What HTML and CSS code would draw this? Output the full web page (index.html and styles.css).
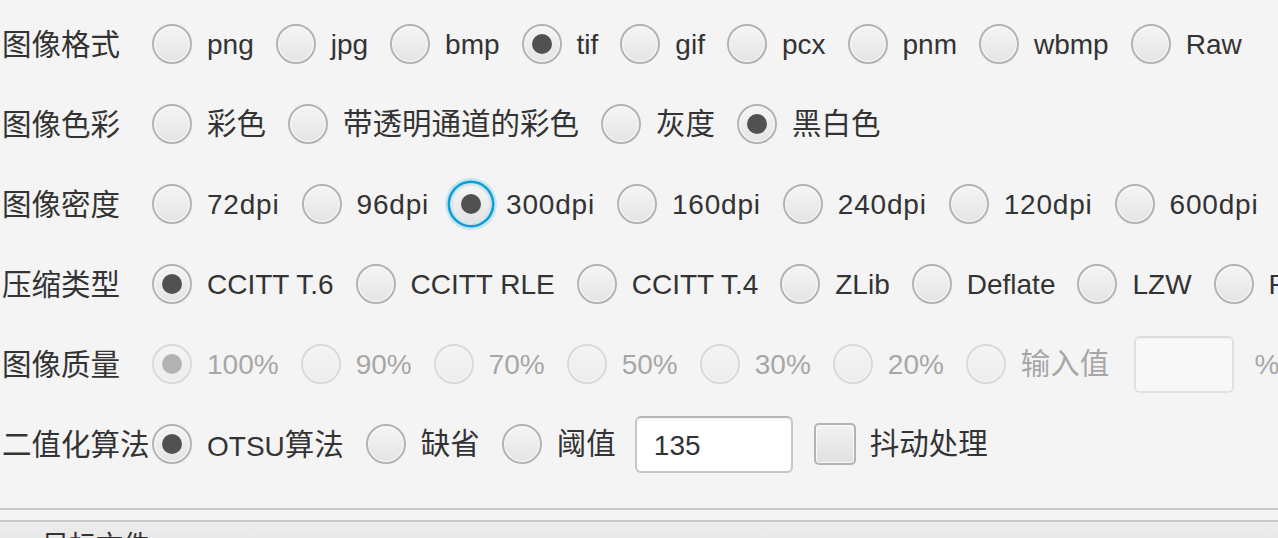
FILE: index.html
```html
<!DOCTYPE html>
<html lang="zh">
<head>
<meta charset="utf-8">
<title>图像设置</title>
<link rel="stylesheet" href="styles.css">
</head>
<body>
<div class="form">
  <div class="row">
    <span class="label zh">图像格式</span>
    <div class="options">
      <label class="opt"><span class="radio"></span><span class="txt">png</span></label>
      <label class="opt"><span class="radio"></span><span class="txt">jpg</span></label>
      <label class="opt"><span class="radio"></span><span class="txt">bmp</span></label>
      <label class="opt"><span class="radio on"></span><span class="txt">tif</span></label>
      <label class="opt"><span class="radio"></span><span class="txt">gif</span></label>
      <label class="opt"><span class="radio"></span><span class="txt">pcx</span></label>
      <label class="opt"><span class="radio"></span><span class="txt">pnm</span></label>
      <label class="opt"><span class="radio"></span><span class="txt">wbmp</span></label>
      <label class="opt"><span class="radio"></span><span class="txt">Raw</span></label>
    </div>
  </div>
  <div class="row">
    <span class="label zh">图像色彩</span>
    <div class="options">
      <label class="opt"><span class="radio"></span><span class="txt zh">彩色</span></label>
      <label class="opt"><span class="radio"></span><span class="txt zh">带透明通道的彩色</span></label>
      <label class="opt"><span class="radio"></span><span class="txt zh">灰度</span></label>
      <label class="opt"><span class="radio on"></span><span class="txt zh">黑白色</span></label>
    </div>
  </div>
  <div class="row">
    <span class="label zh">图像密度</span>
    <div class="options dpi">
      <label class="opt"><span class="radio"></span><span class="txt">72dpi</span></label>
      <label class="opt"><span class="radio"></span><span class="txt">96dpi</span></label>
      <label class="opt"><span class="radio on focus"></span><span class="txt">300dpi</span></label>
      <label class="opt"><span class="radio"></span><span class="txt">160dpi</span></label>
      <label class="opt"><span class="radio"></span><span class="txt">240dpi</span></label>
      <label class="opt"><span class="radio"></span><span class="txt">120dpi</span></label>
      <label class="opt"><span class="radio"></span><span class="txt">600dpi</span></label>
    </div>
  </div>
  <div class="row">
    <span class="label zh">压缩类型</span>
    <div class="options">
      <label class="opt"><span class="radio on"></span><span class="txt">CCITT T.6</span></label>
      <label class="opt"><span class="radio"></span><span class="txt">CCITT RLE</span></label>
      <label class="opt"><span class="radio"></span><span class="txt">CCITT T.4</span></label>
      <label class="opt"><span class="radio"></span><span class="txt">ZLib</span></label>
      <label class="opt"><span class="radio"></span><span class="txt">Deflate</span></label>
      <label class="opt"><span class="radio"></span><span class="txt">LZW</span></label>
      <label class="opt"><span class="radio"></span><span class="txt">PackBits</span></label>
    </div>
  </div>
  <div class="row">
    <span class="label zh">图像质量</span>
    <div class="options">
      <label class="opt disabled"><span class="radio on"></span><span class="txt">100%</span></label>
      <label class="opt disabled"><span class="radio"></span><span class="txt">90%</span></label>
      <label class="opt disabled"><span class="radio"></span><span class="txt">70%</span></label>
      <label class="opt disabled"><span class="radio"></span><span class="txt">50%</span></label>
      <label class="opt disabled"><span class="radio"></span><span class="txt">30%</span></label>
      <label class="opt disabled"><span class="radio"></span><span class="txt">20%</span></label>
      <label class="opt disabled"><span class="radio"></span><span class="txt zh">输入值</span></label>
      <span class="field field-small disabled"></span>
      <span class="txt disabled pct">%</span>
    </div>
  </div>
  <div class="row">
    <span class="label zh">二值化算法</span>
    <div class="options">
      <label class="opt"><span class="radio on"></span><span class="txt">OTSU<span class="zh-in">算法</span></span></label>
      <label class="opt"><span class="radio"></span><span class="txt zh">缺省</span></label>
      <label class="opt"><span class="radio"></span><span class="txt zh">阈值</span></label>
      <span class="field field-wide">135</span>
      <label class="opt"><span class="check"></span><span class="txt zh">抖动处理</span></label>
    </div>
  </div>
</div>
<div class="sep"></div>
<div class="pane-header"><span class="pane-title">目标文件</span></div>
</body>
</html>
```

FILE: styles.css
```css
html, body {
  margin: 0;
  padding: 0;
  background: #f4f4f4;
  overflow: hidden;
  height: 100%;
}
body {
  font-family: "Liberation Sans", "Noto Sans CJK SC", sans-serif;
  font-size: 28px;
  color: #333333;
}
.form {
  display: flex;
  flex-direction: column;
  padding: 4px 0 0 2px;
}
.row {
  display: flex;
  align-items: center;
  height: 80px;
  white-space: nowrap;
}
.label {
  flex: none;
  width: 150px;
  color: #333333;
}
.options {
  display: flex;
  align-items: center;
  gap: 22px;
}
.opt {
  display: flex;
  align-items: center;
  flex: none;
}
.txt {
  line-height: 1.15;
  padding-top: 3px;
}
.zh,
.txt.zh {
  font-family: "Noto Sans CJK SC", sans-serif;
  font-size: 29.5px;
  padding-top: 0;
  padding-bottom: 4px;
}
.zh-in {
  font-family: "Noto Sans CJK SC", sans-serif;
  font-size: 29.5px;
  position: relative;
  top: -1px;
}
.dpi .txt {
  letter-spacing: 0.8px;
}
.radio {
  flex: none;
  box-sizing: border-box;
  width: 40px;
  height: 40px;
  margin-right: 15px;
  border-radius: 50%;
  border: 2px solid #b3b3b3;
  background: linear-gradient(#f5f5f5, #e4e4e4);
  box-shadow: inset 0 0 0 1px #fbfbfb;
  display: flex;
  align-items: center;
  justify-content: center;
}
.radio.on::after {
  content: "";
  width: 20px;
  height: 20px;
  border-radius: 50%;
  background: #515151;
}
.radio.focus {
  border-color: #dbe6ec;
  box-shadow: 0 0 0 1px #cfe3ec, 0 0 0 3.5px #0b9fd6, 0 0 0 6px rgba(11, 159, 214, 0.18);
}
.disabled {
  opacity: 0.4;
}
.check {
  flex: none;
  box-sizing: border-box;
  width: 42px;
  height: 42px;
  margin-right: 14px;
  border-radius: 5px;
  border: 2px solid #b3b3b3;
  background: linear-gradient(#f2f2f2, #e0e0e0);
  box-shadow: inset 0 0 0 1px #f9f9f9;
}
.field {
  flex: none;
  box-sizing: border-box;
  height: 57px;
  border-radius: 6px;
  border: 2px solid #c6c6c6;
  border-top-color: #b6b6b6;
  background: #ffffff;
  box-shadow: inset 0 2px 2px rgba(0, 0, 0, 0.04);
  display: flex;
  align-items: center;
  padding-left: 17px;
  padding-top: 3px;
}
.field-small {
  width: 100px;
  margin-left: 3px;
}
.field-wide {
  width: 158px;
  margin-left: -3px;
  margin-right: -1px;
}
.pct {
  margin-left: -2px;
}
.sep {
  margin-top: 24px;
  height: 2px;
  background: #c8c8c8;
}
.pane-header {
  margin-top: 10px;
  height: 40px;
  border-top: 2px solid #c8c8c8;
  background: linear-gradient(#ededed, #e2e2e2);
  padding-left: 42px;
  box-sizing: border-box;
  padding-top: 2px;
  color: #333333;
}
.pane-title {
  font-family: "Noto Sans CJK SC", sans-serif;
  font-size: 27px;
}
```
